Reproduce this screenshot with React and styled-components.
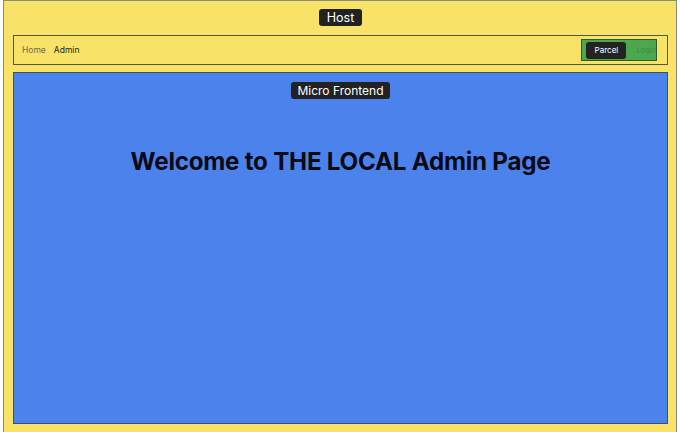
import React from "react";
import styled, { createGlobalStyle } from "styled-components";

const Global = createGlobalStyle`
  html, body { margin: 0; padding: 0; background: #ffffff; }
  body { font-family: Inter, "Noto Sans", sans-serif; }
`;

const Host = styled.div`
  margin: 0 3px;
  height: 432px;
  box-sizing: border-box;
  border: 1px solid #8a8a80;
  border-bottom: none;
  background: #f8e268;
  padding: 8px 8px 0 9px;
  display: flex;
  flex-direction: column;
  align-items: stretch;
  overflow: hidden;
`;

const Tag = styled.div`
  align-self: center;
  background: #222222;
  color: #ffffff;
  font-size: ${(p) => p.$fs || 13}px;
  line-height: 17px;
  height: 17px;
  padding: 0 ${(p) => p.$px || 8}px;
  border-radius: 3px;
`;

const Nav = styled.nav`
  margin-top: 9px;
  height: 30px;
  flex-shrink: 0;
  box-sizing: border-box;
  border: 1px solid #55554a;
  display: flex;
  align-items: center;
  justify-content: space-between;
  padding: 0 10px 0 8px;
`;

const Links = styled.div`
  display: flex;
  gap: 8px;
  font-size: 8.5px;
`;

const Link = styled.span`
  color: ${(p) => (p.$active ? "#222" : "#6f6b55")};
`;

const Group = styled.div`
  display: flex;
  align-items: center;
  height: 22px;
  box-sizing: border-box;
  background: #4ca84f;
  border: 1px solid #2c5a2c;
  padding: 0 0 0 4px;
  gap: 10px;
`;

const Btn = styled.span`
  display: inline-flex;
  align-items: center;
  justify-content: center;
  flex-shrink: 0;
  height: 17px;
  border-radius: 3px;
  background: ${(p) => (p.$dark ? "#232323" : "transparent")};
  color: ${(p) => (p.$dark ? "#ffffff" : "#3a8e3d")};
  font-size: ${(p) => (p.$dark ? 8 : 7.5)}px;
  font-weight: 400;
  width: ${(p) => (p.$dark ? "40px" : "auto")};
`;

const Panel = styled.section`
  margin-top: 7px;
  height: 352px;
  flex-shrink: 0;
  box-sizing: border-box;
  border: 1px solid #40506a;
  background: #4c82ec;
  display: flex;
  flex-direction: column;
  align-items: center;
  padding-top: 9px;
`;

const Title = styled.h1`
  margin: 48px 0 0;
  font-size: 24.2px;
  font-weight: 700;
  color: #0a0a14;
  letter-spacing: -0.25px;
`;

export default function App() {
  return (
    <>
      <Global />
      <Host>
        <Tag $px={8} $fs={12.5}>Host</Tag>
        <Nav>
          <Links>
            <Link>Home</Link>
            <Link $active>Admin</Link>
          </Links>
          <Group>
            <Btn $dark>Parcel</Btn>
            <Btn>Login</Btn>
          </Group>
        </Nav>
        <Panel>
          <Tag $px={6} $fs={12}>Micro Frontend</Tag>
          <Title>Welcome to THE LOCAL Admin Page</Title>
        </Panel>
      </Host>
    </>
  );
}
